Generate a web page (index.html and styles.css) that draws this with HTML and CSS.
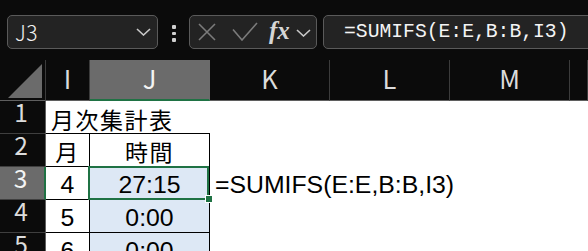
FILE: index.html
```html
<!DOCTYPE html>
<html lang="ja">
<head>
<meta charset="utf-8">
<title>月次集計表</title>
<link rel="stylesheet" href="styles.css">
</head>
<body>
<div class="app">
  <div class="toolbar">
    <div class="box namebox">
      <span class="ref">J3</span>
      <svg class="chev" width="15" height="8" viewBox="0 0 15 8"><polyline points="1,1 7.5,7 14,1" fill="none" stroke="#c8c8c8" stroke-width="1.6"/></svg>
    </div>
    <div class="grip"><i></i><i></i><i></i></div>
    <div class="box fxbtns">
      <svg class="ico-x" width="18" height="18" viewBox="0 0 18 18"><path d="M1 1 L17 17 M17 1 L1 17" stroke="#7b7b7b" stroke-width="1.6" fill="none"/></svg>
      <svg class="ico-ok" width="26" height="19" viewBox="0 0 26 19"><polyline points="1,7.5 10,18 25,1" fill="none" stroke="#7b7b7b" stroke-width="1.6"/></svg>
      <span class="fx">fx</span>
      <svg class="chev2" width="15" height="8" viewBox="0 0 15 8"><polyline points="1,1 7.5,7 14,1" fill="none" stroke="#c8c8c8" stroke-width="1.6"/></svg>
    </div>
    <div class="box formula">=SUMIFS(E:E,B:B,I3)</div>
  </div>

  <div class="sheet">
    <div class="corner"><svg width="45" height="40" viewBox="0 0 45 40"><polygon points="8,38 42,38 42,4" fill="#6b6b6b"/></svg></div>
    <div class="ch">I</div>
    <div class="ch ch-sel">J</div>
    <div class="ch">K</div>
    <div class="ch">L</div>
    <div class="ch">M</div>
    <div class="ch"></div>

    <div class="rh">1</div>
    <div class="c title">月次集計表</div>
    <div class="c rest"></div>

    <div class="rh">2</div>
    <div class="c t jp">月</div>
    <div class="c t jp">時間</div>
    <div class="c rest"></div>

    <div class="rh rh-sel">3</div>
    <div class="c t">4</div>
    <div class="c t blue sel">27:15</div>
    <div class="c rest ftext">=SUMIFS(E:E,B:B,I3)</div>

    <div class="rh">4</div>
    <div class="c t">5</div>
    <div class="c t blue">0:00</div>
    <div class="c rest"></div>

    <div class="rh">5</div>
    <div class="c t">6</div>
    <div class="c t blue">0:00</div>
    <div class="c rest"></div>
  </div>
</div>
</body>
</html>
```
FILE: styles.css
```css
* { box-sizing: border-box; }
html, body { margin: 0; padding: 0; }
body {
  background: #0b0b0b;
  overflow: hidden;
  width: 588px;
  height: 251px;
  font-family: "Liberation Sans", Arial, sans-serif;
}
.app { width: 588px; }

/* ---------- toolbar ---------- */
.toolbar {
  display: flex;
  align-items: flex-start;
  height: 60px;
  padding: 15px 0 0 7px;
}
.box {
  height: 34px;
  background: #232323;
  border: 1px solid #5a5a5a;
  border-radius: 5px;
  display: flex;
  align-items: center;
}
.namebox {
  width: 151px;
  padding-left: 7px;
}
.ref {
  font-family: "Noto Sans CJK JP", "Noto Sans", sans-serif;
  font-weight: 300;
  font-size: 21px;
  color: #f2f2f2;
  letter-spacing: 0.5px;
}
.chev { margin-left: auto; margin-right: 6px; }

.grip {
  margin: 10px 0 0 14px;
  width: 4px;
  display: flex;
  flex-direction: column;
  gap: 3px;
}
.grip i {
  display: block;
  width: 3.5px;
  height: 3.5px;
  border-radius: 1px;
  background: #cfcfcf;
}
.fxbtns {
  margin-left: 13px;
  width: 128px;
  padding-left: 8px;
}
.ico-ok { margin-left: 16px; margin-top: -1px; }
.fx {
  margin-left: 11px;
  font-family: "Liberation Serif", "DejaVu Serif", serif;
  font-style: italic;
  font-weight: bold;
  font-size: 25px;
  color: #d6d6d6;
  line-height: 1;
  margin-top: -4px;
}
.chev2 { margin-left: 6px; margin-top: 1px; }

.formula {
  margin-left: 6px;
  flex: 1;
  margin-right: -20px;
  padding-left: 20px;
  font-family: "Liberation Mono", "DejaVu Sans Mono", monospace;
  font-size: 19.7px;
  color: #f4f4f4;
}

/* ---------- sheet ---------- */
.sheet {
  display: grid;
  grid-template-columns: 46px 44px 120px 120px 120px 120px 1fr;
  grid-template-rows: 41px repeat(5, 33px);
}
.corner {
  background: #0b0b0b;
  border-right: 1px solid #3c3c3c;
  border-bottom: 1px solid #5f5f5f;
  display: flex;
  align-items: flex-start;
}
.ch {
  background: #0b0b0b;
  border-right: 1px solid #3c3c3c;
  border-bottom: 1px solid #5f5f5f;
  color: #dcdcdc;
  font-family: "Noto Sans CJK JP", "Noto Sans", sans-serif;
  font-size: 25.5px;
  line-height: 36px;
  text-align: center;
}
.ch-sel {
  background: #6b6b6b;
  border-right-color: #6b6b6b;
  border-bottom: 2px solid #1f7244;
  color: #f4f4f4;
}
.rh {
  background: #0b0b0b;
  border-right: 1px solid #5f5f5f;
  border-bottom: 1px solid #3f3f3f;
  color: #dcdcdc;
  font-family: "Noto Sans CJK JP", "Noto Sans", sans-serif;
  font-size: 24.5px;
  line-height: 21px;
  text-align: center;
  padding-right: 3px;
}
.rh-sel {
  background: #6b6b6b;
  border-right: 2px solid #1f7244;
  color: #f4f4f4;
}

.c {
  background: #ffffff;
  color: #000;
  font-size: 24.8px;
  line-height: 30px;
  padding-top: 3px;
  white-space: nowrap;
}
.title {
  grid-column: span 2;
  border-bottom: 1px solid #000;
  padding-left: 5px;
  font-family: "Noto Sans CJK JP", sans-serif;
  font-size: 23px;
  letter-spacing: 1.5px;
  line-height: 28px;
  padding-top: 4px;
}
.rest { grid-column: span 4; }
.t {
  border-right: 1px solid #000;
  border-bottom: 1px solid #000;
  text-align: center;
}
.jp {
  font-family: "Noto Sans CJK JP", sans-serif;
  font-size: 23px;
  letter-spacing: 1.5px;
  line-height: 28px;
  padding-top: 3px;
}
.blue { background: #dde8f5; }
.sel { position: relative; z-index: 1; }
.sel::before {
  content: "";
  position: absolute;
  left: -2px;
  top: -1px;
  right: 0;
  bottom: -1px;
  border: 2px solid #1f7244;
}
.sel::after {
  content: "";
  position: absolute;
  right: -3px;
  bottom: -3px;
  width: 6px;
  height: 6px;
  background: #1f7244;
  box-shadow: 0 0 0 1px #ffffff;
}
.ftext { padding-left: 5px; }
```
